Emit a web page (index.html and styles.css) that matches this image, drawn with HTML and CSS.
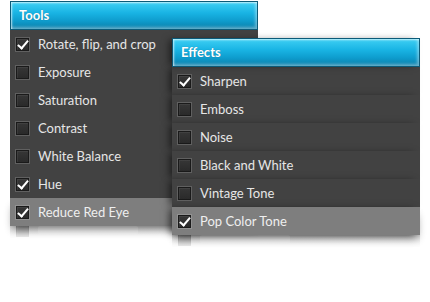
FILE: index.html
```html
<!DOCTYPE html>
<html>
<head>
<meta charset="utf-8">
<link rel="stylesheet" href="styles.css">
</head>
<body>
<div class="stage">
  <div class="panel tools">
    <div class="head">Tools</div>
    <div class="row"><span class="cb on"></span>Rotate, flip, and crop</div>
    <div class="row"><span class="cb"></span>Exposure</div>
    <div class="row"><span class="cb"></span>Saturation</div>
    <div class="row"><span class="cb"></span>Contrast</div>
    <div class="row"><span class="cb"></span>White Balance</div>
    <div class="row"><span class="cb on"></span>Hue</div>
    <div class="row sel"><span class="cb on"></span>Reduce Red Eye</div>
    <div class="refl"><span class="cb"></span><span class="ghost w1"></span></div>
  </div>
  <div class="panel effects">
    <div class="head">Effects</div>
    <div class="row"><span class="cb on"></span>Sharpen</div>
    <div class="row"><span class="cb"></span>Emboss</div>
    <div class="row"><span class="cb"></span>Noise</div>
    <div class="row"><span class="cb"></span>Black and White</div>
    <div class="row"><span class="cb"></span>Vintage Tone</div>
    <div class="row sel"><span class="cb on"></span>Pop Color Tone</div>
    <div class="refl"><span class="cb"></span><span class="ghost w2"></span></div>
  </div>
</div>
</body>
</html>
```
FILE: styles.css
```css
html, body {
  margin: 0;
  padding: 0;
  background: #ffffff;
}
.stage {
  position: relative;
  width: 430px;
  height: 302px;
  overflow: hidden;
  font-family: "Lato", "DejaVu Sans", sans-serif;
}
.panel {
  width: 248px;
}
.tools {
  margin-left: 10px;
  padding-top: 1px;
}
.effects {
  position: absolute;
  left: 172px;
  top: 38px;
}
.head {
  height: 27px;
  line-height: 26px;
  padding-left: 8px;
  color: #ffffff;
  font-weight: bold;
  font-size: 13px;
  border: 1px solid #0b5a78;
  background: linear-gradient(#3fd0f4 0%, #19b4e4 40%, #0e9ccd 70%, #0b7ea8 100%);
  box-shadow: inset 1px 1px 2px rgba(255,255,255,0.7), inset -2px -2px 3px rgba(255,255,255,0.35);
  text-shadow: 0 0 1px rgba(0,0,0,0.3);
  position: relative;
  z-index: 2;
}
.row {
  height: 28px;
  line-height: 25px;
  display: flex;
  align-items: center;
  background: #424242;
  color: #e6e6e6;
  font-size: 13px;
  padding-left: 6px;
  position: relative;
  z-index: 1;
}
.row.sel {
  background: #7e7e7e;
  color: #efefef;
}
.tools .row.sel {
  box-shadow: 0 6px 8px -3px rgba(0,0,0,0.45);
}
.effects .row {
  box-shadow: -5px 0 7px -2px rgba(0,0,0,0.5);
}
.effects .head {
  box-shadow: inset 1px 1px 2px rgba(255,255,255,0.7), inset -2px -2px 3px rgba(255,255,255,0.35), -5px 0 7px -2px rgba(0,0,0,0.5);
}
.effects .row.sel {
  box-shadow: -5px 0 7px -2px rgba(0,0,0,0.5), 0 6px 8px -3px rgba(0,0,0,0.45);
}
.cb {
  box-sizing: border-box;
  width: 13px;
  height: 13px;
  margin-right: 9px;
  border: 1px solid #1a1a1a;
  background: linear-gradient(#363636, #2a2a2a);
  box-shadow: 0 0 0 1px rgba(255,255,255,0.16), inset 1px 1px 0 rgba(255,255,255,0.06);
  position: relative;
  flex: none;
}
.cb.on::after {
  content: "";
  position: absolute;
  left: 3px;
  top: -1px;
  width: 4px;
  height: 9px;
  border-right: 2.5px solid #ffffff;
  border-bottom: 2.5px solid #ffffff;
  transform: rotate(40deg);
}
.refl {
  height: 14px;
  display: flex;
  align-items: flex-start;
  padding-left: 6px;
  padding-top: 2px;
  box-sizing: border-box;
  overflow: hidden;
  background: linear-gradient(rgba(150,150,150,0.45), rgba(255,255,255,0));
  -webkit-mask-image: linear-gradient(rgba(0,0,0,1), rgba(0,0,0,0));
  mask-image: linear-gradient(rgba(0,0,0,1), rgba(0,0,0,0));
}
.refl .cb {
  opacity: 0.4;
  margin-top: -4px;
}
.ghost {
  height: 8px;
  margin-top: -2px;
  background: rgba(255,255,255,0.35);
  border-radius: 2px;
}
.ghost.w1 { width: 100px; }
.ghost.w2 { width: 90px; }
```
